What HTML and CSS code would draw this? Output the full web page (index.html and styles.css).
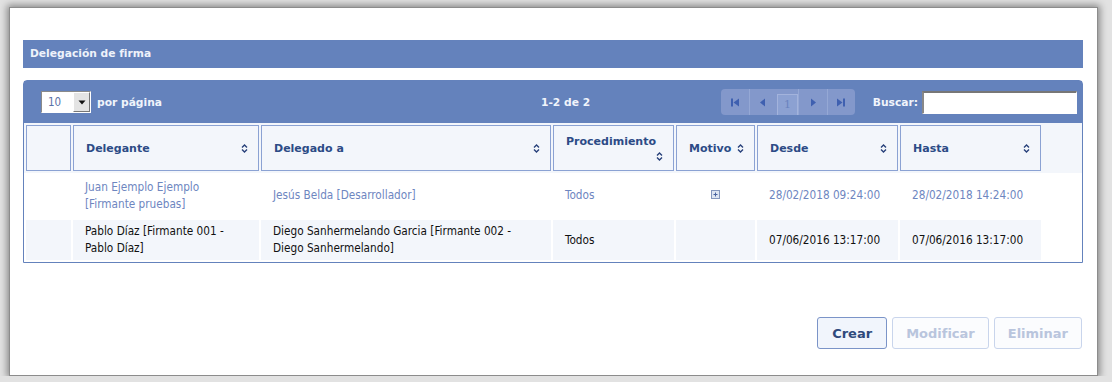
FILE: index.html
```html
<!DOCTYPE html>
<html lang="es">
<head>
    <meta charset="UTF-8">
    <title>Delegación de firma</title>
    <link rel="stylesheet" href="styles.css">
</head>
<body>

    <div class="window">
        <div class="panel-title">Delegación de firma</div>

        <div class="grid">
            <div class="toolbar">
                <div class="page-size">
                    <div class="select">
                        <span class="select-value">10</span>
                        <span class="select-btn">
                            <svg width="8" height="5" viewBox="0 0 8 5"><path d="M0.5 0.5 H7.5 L4 4.5 Z" fill="#111"/></svg>
                        </span>
                    </div>
                    <span class="tb-label">por página</span>
                </div>

                <div class="tb-info">1-2 de 2</div>

                <div class="pager">
                    <span class="pg-btn">
                        <svg width="10" height="9" viewBox="0 0 10 9"><rect x="1" y="0.5" width="2" height="8" fill="#3f60b0"/><path d="M9 0.5 V8.5 L3.5 4.5 Z" fill="#3f60b0"/></svg>
                    </span>
                    <span class="pg-btn">
                        <svg width="8" height="9" viewBox="0 0 8 9"><path d="M6 0.5 V8.5 L1 4.5 Z" fill="#3f60b0"/></svg>
                    </span>
                    <span class="pg-num">1</span>
                    <span class="pg-btn">
                        <svg width="8" height="9" viewBox="0 0 8 9"><path d="M2 0.5 V8.5 L7 4.5 Z" fill="#3f60b0"/></svg>
                    </span>
                    <span class="pg-btn">
                        <svg width="10" height="9" viewBox="0 0 10 9"><path d="M1 0.5 V8.5 L6.5 4.5 Z" fill="#3f60b0"/><rect x="7" y="0.5" width="2" height="8" fill="#3f60b0"/></svg>
                    </span>
                </div>

                <div class="search">
                    <span class="tb-label">Buscar:</span>
                    <input type="text" class="search-input">
                </div>
            </div>

            <table class="data">
                <colgroup>
                    <col style="width: 45px">
                    <col style="width: 186px">
                    <col style="width: 290px">
                    <col style="width: 121px">
                    <col style="width: 79px">
                    <col style="width: 141px">
                    <col style="width: 141px">
                    <col>
                </colgroup>
                <thead>
                    <tr>
                        <th></th>
                        <th><div class="th-in"><span>Delegante</span><svg class="sort" width="7" height="11" viewBox="0 0 7 11"><path d="M1 4.5 L3.5 2 L6 4.5 M1 6.5 L3.5 9 L6 6.5" fill="none" stroke="#27407a" stroke-width="1.4"/></svg></div></th>
                        <th><div class="th-in"><span>Delegado a</span><svg class="sort" width="7" height="11" viewBox="0 0 7 11"><path d="M1 4.5 L3.5 2 L6 4.5 M1 6.5 L3.5 9 L6 6.5" fill="none" stroke="#27407a" stroke-width="1.4"/></svg></div></th>
                        <th><div class="th-in"><span>Procedimiento</span><svg class="sort" width="7" height="11" viewBox="0 0 7 11"><path d="M1 4.5 L3.5 2 L6 4.5 M1 6.5 L3.5 9 L6 6.5" fill="none" stroke="#27407a" stroke-width="1.4"/></svg></div></th>
                        <th><div class="th-in"><span>Motivo</span><svg class="sort" width="7" height="11" viewBox="0 0 7 11"><path d="M1 4.5 L3.5 2 L6 4.5 M1 6.5 L3.5 9 L6 6.5" fill="none" stroke="#27407a" stroke-width="1.4"/></svg></div></th>
                        <th><div class="th-in"><span>Desde</span><svg class="sort" width="7" height="11" viewBox="0 0 7 11"><path d="M1 4.5 L3.5 2 L6 4.5 M1 6.5 L3.5 9 L6 6.5" fill="none" stroke="#27407a" stroke-width="1.4"/></svg></div></th>
                        <th><div class="th-in"><span>Hasta</span><svg class="sort" width="7" height="11" viewBox="0 0 7 11"><path d="M1 4.5 L3.5 2 L6 4.5 M1 6.5 L3.5 9 L6 6.5" fill="none" stroke="#27407a" stroke-width="1.4"/></svg></div></th>
                        <th class="filler"></th>
                    </tr>
                </thead>
                <tbody>
                    <tr class="row-a">
                        <td></td>
                        <td>Juan Ejemplo Ejemplo<br>[Firmante pruebas]</td>
                        <td>Jesús Belda [Desarrollador]</td>
                        <td>Todos</td>
                        <td class="center">
                            <svg width="9" height="9" viewBox="0 0 9 9"><rect x="0.5" y="0.5" width="8" height="8" fill="#dde5f2" stroke="#8396bd"/><path d="M2.5 4.5 H6.5 M4.5 2.5 V6.5" stroke="#4863a0" stroke-width="1"/></svg>
                        </td>
                        <td>28/02/2018 09:24:00</td>
                        <td>28/02/2018 14:24:00</td>
                        <td class="filler"></td>
                    </tr>
                    <tr class="row-b">
                        <td></td>
                        <td>Pablo Díaz [Firmante 001 -<br>Pablo Díaz]</td>
                        <td>Diego Sanhermelando Garcia [Firmante 002 -<br>Diego Sanhermelando]</td>
                        <td>Todos</td>
                        <td></td>
                        <td>07/06/2016 13:17:00</td>
                        <td>07/06/2016 13:17:00</td>
                        <td class="filler"></td>
                    </tr>
                </tbody>
            </table>
        </div>

        <div class="actions">
            <button class="btn btn-primary" type="button">Crear</button>
            <button class="btn" type="button" disabled>Modificar</button>
            <button class="btn" type="button" disabled>Eliminar</button>
        </div>
    </div>

</body>
</html>
```

FILE: styles.css
```css
body {
    margin: 0;
    padding: 0;
    background-color: #e2e2e2;
    font-family: "DejaVu Sans Condensed", "DejaVu Sans", Verdana, sans-serif;
    font-size: 11.7px;
}
.window {
    margin: 7px 14px 0 9px;
    height: 369px;
    box-sizing: border-box;
    padding: 32px 14px 0 13px;
    background-color: #fff;
    border: 1px solid #8c8c8c;
    box-shadow: 0 0 7px 2px rgba(0, 0, 0, 0.4);
}
.panel-title {
    height: 28px;
    line-height: 28px;
    padding-left: 7px;
    background-color: #6482bc;
    color: #eef2fa;
    font-family: "DejaVu Sans", Verdana, sans-serif;
    font-weight: bold;
    font-size: 10.7px;
}

/* tabla */
.grid {
    margin-top: 12px;
    border: 1px solid #6482bc;
    border-radius: 4px 4px 0 0;
}
.toolbar {
    height: 42px;
    background-color: #6482bc;
    display: flex;
    align-items: center;
    padding: 0 5px 0 17px;
    color: #f0f4fb;
    font-family: "DejaVu Sans", Verdana, sans-serif;
    font-size: 10.7px;
    font-weight: bold;
}
.page-size {
    display: flex;
    align-items: center;
    width: 500px;
    flex-shrink: 0;
}
.select {
    display: flex;
    width: 50px;
    height: 22px;
    box-sizing: border-box;
    border: 1px solid #fff;
    border-top-color: #8a8a8a;
    border-left-color: #8a8a8a;
    background-color: #fff;
}
.select-value {
    flex: 1;
    padding-left: 6px;
    line-height: 20px;
    color: #5a72a8;
    font-family: "DejaVu Sans Condensed", sans-serif;
    font-size: 11.5px;
    font-weight: normal;
}
.select-btn {
    width: 17px;
    display: flex;
    align-items: center;
    justify-content: center;
    background-color: #e4e4e4;
    border: 1px solid #fff;
    border-right-color: #777;
    border-bottom-color: #777;
    box-sizing: border-box;
}
.tb-label {
    margin-left: 6px;
}
.tb-info {
    width: 180px;
    flex-shrink: 0;
}
.pager {
    display: flex;
    width: 134px;
    height: 26px;
    flex-shrink: 0;
    background-color: #8398cb;
    border-radius: 4px;
    overflow: hidden;
}
.pg-btn {
    flex: 1;
    display: flex;
    align-items: center;
    justify-content: center;
    border-left: 1px solid #95a8d5;
}
.pg-btn:first-child {
    border-left: none;
}
.pg-num {
    width: 19px;
    margin-top: 5px;
    background-color: #8ca1d2;
    border-left: 1px solid #a3b3dc;
    border-right: 1px solid #a3b3dc;
    border-top: 1px solid #a3b3dc;
    color: #6a83be;
    text-align: center;
    font-family: "DejaVu Serif", serif;
    font-weight: normal;
    font-size: 11px;
    line-height: 20px;
}
.search {
    margin-left: auto;
    display: flex;
    align-items: center;
}
.search-input {
    margin-left: 4px;
    width: 155px;
    height: 23px;
    box-sizing: border-box;
    border: 1px solid #fff;
    border-top: 2px solid #777;
    border-left: 2px solid #888;
    outline: none;
}

.data {
    width: 100%;
    table-layout: fixed;
    border-spacing: 2px;
}
.data th {
    height: 46px;
    box-sizing: border-box;
    background-color: #f3f6fb;
    border: 1px solid #8ba2d3;
    box-shadow: 0 0 0 2px #f3f6fb;
    padding: 0 10px 0 12px;
    color: #2c4b86;
    font-family: "DejaVu Sans", Verdana, sans-serif;
    font-size: 11px;
    font-weight: bold;
    text-align: left;
}
.data th.filler {
    border-color: #f3f6fb;
}
.th-in {
    display: flex;
    flex-wrap: wrap;
    align-items: center;
    justify-content: space-between;
    row-gap: 3px;
}
.th-in .sort {
    margin-left: auto;
    padding-left: 5px;
}
.data td {
    padding: 0 6px 0 12px;
    line-height: 17px;
    vertical-align: middle;
}
.row-a td {
    height: 45px;
    color: #6e86bf;
}
.row-b td {
    height: 40px;
    color: #111;
    background-color: #f3f6fb;
}
.data td.filler {
    background-color: transparent;
}
.data td.center {
    text-align: center;
    padding: 0;
}

/* botones */
.actions {
    margin-top: 54px;
    display: flex;
    justify-content: flex-end;
    gap: 5px;
    padding-right: 1px;
}
.btn {
    height: 32px;
    padding: 0 13px;
    border: 1px solid #c9d5ec;
    border-radius: 3px;
    background-color: #fbfcfe;
    color: #b9c5dd;
    font-family: "DejaVu Sans", Verdana, sans-serif;
    font-size: 13px;
    font-weight: bold;
}
.btn-primary {
    padding: 0 14px;
    border-color: #7b94c8;
    background-color: #f1f5fc;
    color: #2f4a7c;
}
```
